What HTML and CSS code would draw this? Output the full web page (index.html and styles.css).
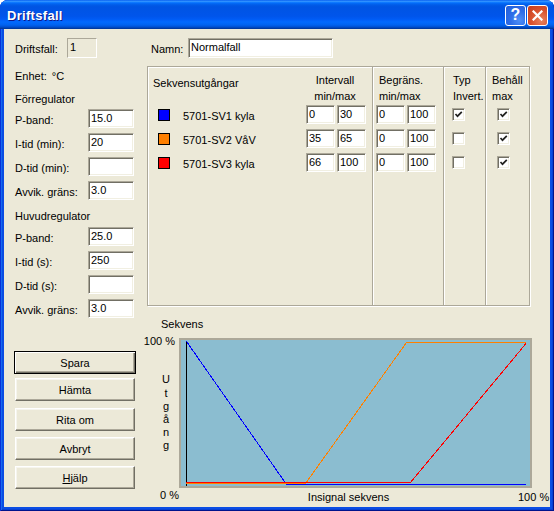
FILE: index.html
```html
<!DOCTYPE html>
<html lang="sv">
<head>
<meta charset="utf-8">
<title>Driftsfall</title>
<link rel="stylesheet" href="styles.css">
</head>
<body>
<div class="window">
  <div class="titlebar">
    <span class="title">Driftsfall</span>
    <div class="tbtns">
      <span class="tbtn help">?</span>
      <span class="tbtn close"><svg width="11" height="11" viewBox="0 0 11 11"><path d="M1.5 1.5 L9.5 9.5 M9.5 1.5 L1.5 9.5" stroke="#fff" stroke-width="2.2" stroke-linecap="square"/></svg></span>
    </div>
  </div>
  <div class="body">
    <div class="leftcol">
      <div class="toprow">
        <span class="lbl drift-lbl">Driftsfall:</span>
        <input class="fld dis" value="1" readonly>
      </div>
      <div class="plain enhet"><span>Enhet:</span><span>°C</span></div>
      <div class="plain sect first">Förregulator</div>
      <div class="frow first-row"><label>P-band:</label><input class="fld" value="15.0"></div>
      <div class="frow"><label>I-tid (min):</label><input class="fld" value="20"></div>
      <div class="frow"><label>D-tid (min):</label><input class="fld" value=""></div>
      <div class="frow"><label>Avvik. gräns:</label><input class="fld" value="3.0"></div>
      <div class="plain sect second">Huvudregulator</div>
      <div class="frow first-row2"><label>P-band:</label><input class="fld" value="25.0"></div>
      <div class="frow"><label>I-tid (s):</label><input class="fld" value="250"></div>
      <div class="frow"><label>D-tid (s):</label><input class="fld" value=""></div>
      <div class="frow"><label>Avvik. gräns:</label><input class="fld" value="3.0"></div>
      <div class="btns">
        <button class="btn def">Spara</button>
        <button class="btn">Hämta</button>
        <button class="btn gap7">Rita om</button>
        <button class="btn">Avbryt</button>
        <button class="btn"><u>H</u>jälp</button>
      </div>
    </div>
    <div class="rightcol">
      <div class="toprow namnrow">
        <span class="lbl namn-lbl">Namn:</span>
        <input class="fld namn" value="Normalfall">
      </div>
      <div class="group">
        <div class="col names">
          <div class="hdr">Sekvensutgångar</div>
          <div class="cell"><span class="sw blue"></span><span class="nm">5701-SV1 kyla</span></div>
          <div class="cell"><span class="sw orange"></span><span class="nm">5701-SV2 VåV</span></div>
          <div class="cell"><span class="sw red"></span><span class="nm">5701-SV3 kyla</span></div>
        </div>
        <div class="col iv sep">
          <div class="hdr">Intervall<br>min/max</div>
          <div class="cell"><input class="fld sm" value="0"><input class="fld sm" value="30"></div>
          <div class="cell"><input class="fld sm" value="35"><input class="fld sm" value="65"></div>
          <div class="cell"><input class="fld sm" value="66"><input class="fld sm" value="100"></div>
        </div>
        <div class="col beg sep">
          <div class="hdr">Begräns.<br>min/max</div>
          <div class="cell"><input class="fld sm" value="0"><input class="fld sm" value="100"></div>
          <div class="cell"><input class="fld sm" value="0"><input class="fld sm" value="100"></div>
          <div class="cell"><input class="fld sm" value="0"><input class="fld sm" value="100"></div>
        </div>
        <div class="col typ sep">
          <div class="hdr">Typ<br>Invert.</div>
          <div class="cell"><span class="cb"><svg width="11" height="11" viewBox="0 0 11 11"><path d="M2.5 5 L4.5 7.2 L8.8 2.8" fill="none" stroke="#21211f" stroke-width="1.7"/></svg></span></div>
          <div class="cell"><span class="cb"></span></div>
          <div class="cell"><span class="cb"></span></div>
        </div>
        <div class="col beh">
          <div class="hdr">Behåll<br>max</div>
          <div class="cell"><span class="cb"><svg width="11" height="11" viewBox="0 0 11 11"><path d="M2.5 5 L4.5 7.2 L8.8 2.8" fill="none" stroke="#21211f" stroke-width="1.7"/></svg></span></div>
          <div class="cell"><span class="cb"><svg width="11" height="11" viewBox="0 0 11 11"><path d="M2.5 5 L4.5 7.2 L8.8 2.8" fill="none" stroke="#21211f" stroke-width="1.7"/></svg></span></div>
          <div class="cell"><span class="cb"><svg width="11" height="11" viewBox="0 0 11 11"><path d="M2.5 5 L4.5 7.2 L8.8 2.8" fill="none" stroke="#21211f" stroke-width="1.7"/></svg></span></div>
        </div>
      </div>
      <div class="seklbl">Sekvens</div>
      <div class="chartgrid">
        <span class="pct-top">100 %</span>
        <span class="ylab"><span>U</span><span>t</span><span>g</span><span>å</span><span>n</span><span>g</span></span>
        <div class="chart">
          <svg width="349" height="146" viewBox="0 0 349 146" shape-rendering="crispEdges">
            <line x1="5.5" y1="1" x2="5.5" y2="146" stroke="#000" stroke-width="1"/>
            <polyline points="5.5,1.5 105.5,144.5 345,144.5" fill="none" stroke="#0000ff" stroke-width="1"/>
            <polyline points="5,143.5 124.5,143.5 225.5,2.5 345,2.5" fill="none" stroke="#ff8000" stroke-width="1"/>
            <polyline points="5,142.5 229.5,142.5 345,3.5" fill="none" stroke="#ff0000" stroke-width="1"/>
          </svg>
        </div>
        <span class="pct-zero">0 %</span>
        <span class="xlab">Insignal sekvens</span>
        <span class="pct-right">100 %</span>
      </div>
    </div>
  </div>
</div>
</body>
</html>
```

FILE: styles.css
```css
* { box-sizing: border-box; }
html, body { margin: 0; padding: 0; background: #ffffff; }
body { font-family: "Liberation Sans", Arial, sans-serif; font-size: 11px; color: #000; }

.window {
  width: 554px; height: 511px;
  display: flex; flex-direction: column;
  background: #0a4de4;
  border-radius: 8px 8px 0 0;
  overflow: hidden;
  padding: 0 4px 4px;
  box-shadow: inset 1px 0 0 #0831d9, inset -1px -1px 0 #00138c, inset 2px 0 0 #166aee, inset -2px -2px 0 #0840d2;
}

.titlebar {
  flex: none; height: 29px; margin: 0 -4px;
  display: flex; align-items: center;
  padding: 0 6px 0 7px;
  background: linear-gradient(to bottom, #0058ee 0%, #3593ff 4%, #288eff 6%, #127dff 8%, #036ffc 10%, #0262ee 14%, #0057e5 20%, #0054e3 24%, #0055eb 56%, #005bf5 66%, #026afe 76%, #0062ef 86%, #0052d6 92%, #0040ab 97%, #003092 100%);
}
.title {
  flex: 1; color: #fff;
  font: bold 13px "Liberation Sans", Arial, sans-serif;
  letter-spacing: 0.3px; padding-top: 1px;
  text-shadow: 1px 1px 0 #0f1a89;
}
.tbtns { display: flex; gap: 1px; margin-top: 1px; }
.tbtn {
  width: 21px; height: 21px; border: 1px solid #fff; border-radius: 3px;
  display: flex; align-items: center; justify-content: center;
}
.help {
  background: radial-gradient(circle at 70% 75%, #4f8ff7 0%, #2f6ee8 45%, #225dd9 100%);
  color: #fff; font: bold 16px "Liberation Sans", Arial, sans-serif; line-height: 1;
}
.close {
  background: radial-gradient(circle at 70% 75%, #e8835f 0%, #d9532f 50%, #c43b1a 100%);
}

.body {
  flex: 1; background: #ece9d8;
  display: flex; padding: 9px 0 0 11px; overflow: hidden;
}
.leftcol { width: 132px; flex: none; display: flex; flex-direction: column; }
.rightcol { flex: 1; display: flex; flex-direction: column; min-width: 0; }

.toprow { height: 20px; display: flex; align-items: center; }
.lbl { padding-top: 2px; }
.drift-lbl { width: 52px; }
.namnrow { padding-left: 4px; }
.namn-lbl { width: 37px; }

.fld {
  font: 11px "Liberation Sans", Arial, sans-serif; color: #000;
  height: 19px; margin: 0; outline: none;
  border: 1px solid; border-color: #aca899 #fff #fff #aca899;
  box-shadow: inset 1px 1px 0 #716f64, inset -1px -1px 0 #f1efe2;
  background: #fff; padding: 0 0 2px 2px;
}
.dis { background: #ece9d8; width: 30px; height: 20px; box-shadow: none; border-color: #aca899 #fff #fff #aca899; }
.namn { width: 145px; height: 20px; }

.plain { line-height: 13px; }
.enhet { margin-top: 12px; display: flex; gap: 5px; }
.sect.first { margin-top: 10px; }
.sect.second { margin-top: 5px; }
.frow { height: 24px; display: flex; align-items: flex-start; flex: none; }
.frow label { width: 73px; padding-top: 5px; line-height: 13px; }
.frow .fld { width: 46px; }
.first-row { margin-top: 3px; }
.first-row2 { margin-top: 4px; }

.btns { margin-top: 28px; display: flex; flex-direction: column; }
.btn {
  font: 11px "Liberation Sans", Arial, sans-serif; color: #000;
  width: 120px; height: 23px; margin: 0 0 6px 0; padding: 0;
  background: #ece9d8;
  border: 1px solid; border-color: #fff #716f64 #716f64 #fff;
  box-shadow: inset -1px -1px 0 #aca899, inset 1px 1px 0 #f6f5ee;
  display: flex; align-items: center; justify-content: center;
}
.btn.def {
  width: 122px; margin-left: -1px; margin-bottom: 4px;
  border: 1px solid #000;
  box-shadow: inset 1px 1px 0 #fff, inset -1px -1px 0 #716f64, inset -2px -2px 0 #aca899;
}
.btn.gap7 { margin-top: 1px; }

.group {
  flex: none; width: 383px; height: 240px; margin-top: 8px;
  border: 1px solid #aca899;
  box-shadow: 1px 1px 0 #fff, inset 1px 1px 0 #fff;
  display: flex;
}
.col { display: flex; flex-direction: column; }
.col.sep { border-right: 1px solid #aca899; box-shadow: 1px 0 0 #fff; }
.hdr { height: 38px; padding-top: 5px; line-height: 16px; flex: none; }
.cell { height: 24px; display: flex; align-items: flex-start; flex: none; }

.names { width: 158px; }
.names .hdr { padding: 8px 0 0 5px; }
.names .cell { padding-left: 10px; }
.sw { width: 12px; height: 12px; border: 1px solid #000; margin-top: 4px; flex: none; }
.sw.blue { background: #0000ff; }
.sw.orange { background: #ff8000; }
.sw.red { background: #ff0000; }
.nm { margin-left: 13px; padding-top: 5px; line-height: 13px; white-space: nowrap; }

.fld.sm { width: 29px; }
.iv { width: 67px; }
.iv .hdr { text-align: center; padding-right: 8px; }
.iv .cell { gap: 2px; }
.beg { width: 71px; }
.beg .hdr { padding-left: 6px; }
.beg .cell { gap: 2px; padding-left: 3px; }
.typ { width: 42px; }
.typ .hdr { padding-left: 9px; }
.typ .cell { padding-left: 8px; }
.beh { flex: 1; }
.beh .hdr { padding-left: 6px; }
.beh .cell { padding-left: 11px; }

.cb {
  width: 13px; height: 13px; margin-top: 3px; display: block;
  border: 1px solid; border-color: #aca899 #fff #fff #aca899;
  box-shadow: inset 1px 1px 0 #716f64, inset -1px -1px 0 #f1efe2;
  background: #fff;
}
.cb svg { display: block; }

.seklbl { margin-top: 12px; padding-left: 14px; line-height: 13px; }

.chartgrid {
  margin-top: 7px;
  display: grid;
  grid-template-columns: 32px 339px 14px 1fr;
  grid-template-rows: 150px 19px;
}
.pct-top { grid-area: 1 / 1; justify-self: end; align-self: start; padding-right: 4px; margin-top: -3px; line-height: 13px; white-space: nowrap; }
.ylab { grid-area: 1 / 1; align-self: center; justify-self: start; margin-left: 13px; width: 12px; display: flex; flex-direction: column; align-items: center; line-height: 13.2px; }
.chart { grid-area: 1 / 2 / 2 / 4; border: 2px solid #aca899; background: #8bbdd0; }
.chart svg { display: block; }
.pct-zero { grid-area: 2 / 1; justify-self: end; padding-top: 1px; line-height: 13px; white-space: nowrap; }
.xlab { grid-area: 2 / 2; justify-self: center; padding-top: 3px; line-height: 13px; }
.pct-right { grid-area: 2 / 3 / 3 / 5; padding-top: 3px; line-height: 13px; white-space: nowrap; }
```
